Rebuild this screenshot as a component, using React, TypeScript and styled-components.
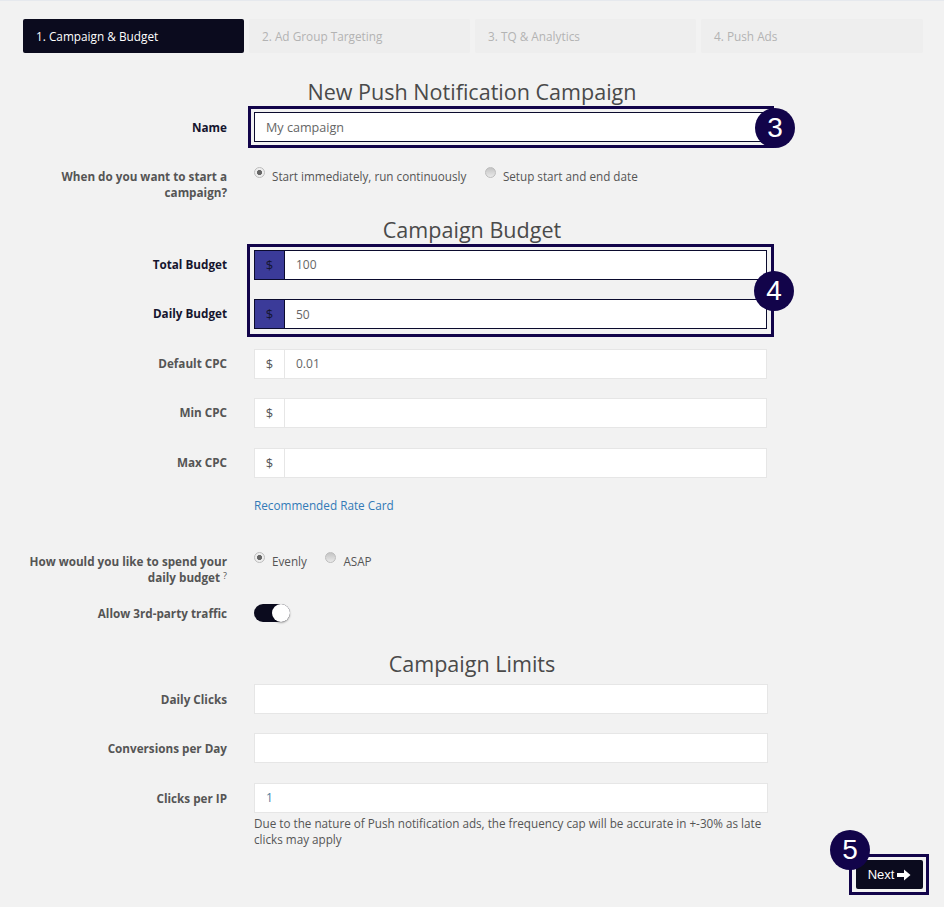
import React from "react";
import styled, { createGlobalStyle } from "styled-components";

const Global = createGlobalStyle`
  html, body { margin: 0; padding: 0; background: #f2f2f2; }
  body { font-family: "Open Sans", "Liberation Sans", sans-serif; font-size: 11.7px; color: #555; }
  * { box-sizing: border-box; }
`;

const Page = styled.div`
  position: relative;
  width: 944px;
  height: 907px;
  overflow: hidden;
  border-top: 1px solid #e6e9ee;
  background: #f2f2f2;
`;

const Tabs = styled.div`
  display: grid;
  grid-template-columns: 221px 221px 221px 222px;
  gap: 5px;
  padding: 18px 0 0 23px;
`;

const Tab = styled.div<{ $active?: boolean }>`
  height: 34px;
  padding-left: 13px;
  display: flex;
  align-items: center;
  border-radius: 2px;
  font-size: 11.8px;
  background: ${(p) => (p.$active ? "#0b0b1e" : "#eeeeee")};
  color: ${(p) => (p.$active ? "#fff" : "#b3b3b3")};
`;

const Heading = styled.h2<{ $top: number; $bottom: number }>`
  margin: ${(p) => p.$top}px 0 ${(p) => p.$bottom}px;
  font-size: 21.55px;
  line-height: 30px;
  font-weight: 400;
  color: #4a4a4a;
  text-align: center;
`;

const Row = styled.div<{ $gap?: number }>`
  display: grid;
  grid-template-columns: 227px 1fr;
  column-gap: 27px;
  margin-bottom: ${(p) => p.$gap ?? 19.5}px;
`;

const Label = styled.label<{ $dark?: boolean; $offset?: number }>`
  text-align: right;
  font-weight: 700;
  font-size: 11.7px;
  line-height: 16px;
  padding-top: ${(p) => p.$offset ?? 6}px;
  color: ${(p) => (p.$dark ? "#15152e" : "#555555")};
`;

const Sup = styled.span`
  font-size: 9px;
  font-weight: 400;
  line-height: 0;
  vertical-align: 3px;
`;

const InputGroup = styled.div<{ $w?: number }>`
  display: flex;
  width: ${(p) => p.$w ?? 513}px;
`;

const Addon = styled.span<{ $marked?: boolean }>`
  flex: none;
  width: 30px;
  height: 30px;
  display: flex;
  align-items: center;
  justify-content: center;
  font-size: 13px;
  background: ${(p) => (p.$marked ? "#3b3b99" : "#fff")};
  color: ${(p) => (p.$marked ? "#15152e" : "#555")};
  border: 1px solid ${(p) => (p.$marked ? "#0b0b2e" : "#e6e6e6")};
  border-right-width: 0;
`;

const Input = styled.div<{ $marked?: boolean; $blue?: boolean; $size?: number }>`
  flex: 1;
  height: 30px;
  background: #fff;
  border: 1px solid ${(p) => (p.$marked ? "#0b0b2e" : "#e6e6e6")};
  padding-left: 11px;
  display: flex;
  align-items: center;
  font-size: ${(p) => p.$size ?? 12}px;
  color: ${(p) => (p.$blue ? "#4f7f9f" : "#666")};
`;

const Radios = styled.div`
  display: flex;
  align-items: flex-start;
  padding-top: 5px;
  font-size: 11.7px;
  color: #555;
`;

const RadioItem = styled.span`
  display: inline-flex;
  align-items: flex-start;
  gap: 8px;
  margin-right: 18.5px;
  line-height: 18px;
`;

const RadioDot = styled.i<{ $on?: boolean }>`
  width: 11px;
  height: 11px;
  margin-right: -1px;
  border-radius: 50%;
  flex: none;
  border: 1px solid #bdbdbd;
  background: ${(p) =>
    p.$on
      ? "radial-gradient(circle, #666 0 2.2px, #eee 2.9px)"
      : "linear-gradient(#c4c4c4, #e9e9e9)"};
`;

const RateLink = styled.a`
  display: block;
  margin: 1px 0 34px 254px;
  font-size: 11.75px;
  line-height: 16px;
  color: #337ab7;
`;

const Toggle = styled.span`
  position: relative;
  display: block;
  width: 36px;
  height: 18px;
  margin-top: 4px;
  border-radius: 9px;
  background: #0b0b1e;
`;

const Knob = styled.span`
  position: absolute;
  right: 0;
  top: 0;
  width: 18px;
  height: 18px;
  border-radius: 50%;
  background: #fff;
  box-shadow: 0 1px 2px rgba(0, 0, 0, 0.35);
`;

const Help = styled.p`
  margin: 2px 0 0;
  width: 513px;
  font-size: 11.7px;
  line-height: 16px;
  color: #555;
`;

const NextButton = styled.button`
  position: absolute;
  left: 856px;
  top: 859px;
  width: 67px;
  height: 29px;
  display: flex;
  align-items: center;
  justify-content: center;
  gap: 3px;
  border: 0;
  border-radius: 2px;
  background: #0b0b1e;
  color: #fff;
  font-family: "Liberation Sans", Arial, sans-serif;
  font-size: 13px;
  padding: 0;
`;

const Marker = styled.div<{ $l: number; $t: number; $w: number; $h: number }>`
  position: absolute;
  left: ${(p) => p.$l}px;
  top: ${(p) => p.$t}px;
  width: ${(p) => p.$w}px;
  height: ${(p) => p.$h}px;
  border: 3px solid #12044a;
  pointer-events: none;
`;

const Badge = styled.div<{ $x: number; $y: number }>`
  position: absolute;
  left: ${(p) => p.$x - 20}px;
  top: ${(p) => p.$y - 20}px;
  width: 40px;
  height: 40px;
  border-radius: 50%;
  background: #12044a;
  color: #fff;
  display: flex;
  align-items: center;
  justify-content: center;
  font-family: "Liberation Sans", Arial, sans-serif;
  font-size: 28px;
`;

const CurrencyRow = ({ label, value, marked }: { label: string; value?: string; marked?: boolean }) => (
  <Row>
    <Label $dark={marked}>{label}</Label>
    <InputGroup>
      <Addon $marked={marked}>$</Addon>
      <Input $marked={marked}>{value}</Input>
    </InputGroup>
  </Row>
);

const LimitRow = ({ label, value, gap }: { label: string; value?: string; gap?: number }) => (
  <Row $gap={gap}>
    <Label $offset={7}>{label}</Label>
    <InputGroup $w={514}>
      <Input $blue>{value}</Input>
    </InputGroup>
  </Row>
);

export default function App() {
  return (
    <Page>
      <Global />
      <Tabs>
        <Tab $active>1. Campaign &amp; Budget</Tab>
        <Tab>2. Ad Group Targeting</Tab>
        <Tab>3. TQ &amp; Analytics</Tab>
        <Tab>4. Push Ads</Tab>
      </Tabs>

      <Heading $top={24} $bottom={5}>New Push Notification Campaign</Heading>
      <Row $gap={20}>
        <Label $dark $offset={7}>Name</Label>
        <InputGroup>
          <Input $marked $size={12.6}>My campaign</Input>
        </InputGroup>
      </Row>
      <Row $gap={0}>
        <Label $offset={6}>When do you want to start a campaign?</Label>
        <Radios>
          <RadioItem><RadioDot $on />Start immediately, run continuously</RadioItem>
          <RadioItem><RadioDot />Setup start and end date</RadioItem>
        </Radios>
      </Row>

      <Heading $top={14.9} $bottom={5}>Campaign Budget</Heading>
      <CurrencyRow label="Total Budget" value="100" marked />
      <CurrencyRow label="Daily Budget" value="50" marked />
      <CurrencyRow label="Default CPC" value="0.01" />
      <CurrencyRow label="Min CPC" />
      <CurrencyRow label="Max CPC" />
      <RateLink>Recommended Rate Card</RateLink>

      <Row $gap={15}>
        <Label $offset={6}>How would you like to spend your daily budget <Sup>?</Sup></Label>
        <Radios>
          <RadioItem><RadioDot $on />Evenly</RadioItem>
          <RadioItem><RadioDot />ASAP</RadioItem>
        </Radios>
      </Row>
      <Row $gap={27}>
        <Label $offset={5}>Allow 3rd-party traffic</Label>
        <Toggle><Knob /></Toggle>
      </Row>

      <Heading $top={0} $bottom={4.5}>Campaign Limits</Heading>
      <LimitRow label="Daily Clicks" />
      <LimitRow label="Conversions per Day" />
      <LimitRow label="Clicks per IP" value="1" gap={0} />
      <Row $gap={0}>
        <span />
        <Help>Due to the nature of Push notification ads, the frequency cap will be accurate in +-30% as late clicks may apply</Help>
      </Row>

      <NextButton>
        Next
        <svg width="14" height="12" viewBox="0 0 14 12">
          <path d="M0 4h7V.5L13.5 6 7 11.5V8H0z" fill="#fff" />
        </svg>
      </NextButton>

      <Marker $l={248} $t={105} $w={526} $h={42} />
      <Badge $x={775} $y={127}>3</Badge>
      <Marker $l={247} $t={243} $w={527} $h={93} />
      <Badge $x={774} $y={290}>4</Badge>
      <Marker $l={849} $t={853} $w={80} $h={41} />
      <Badge $x={850} $y={849}>5</Badge>
    </Page>
  );
}
